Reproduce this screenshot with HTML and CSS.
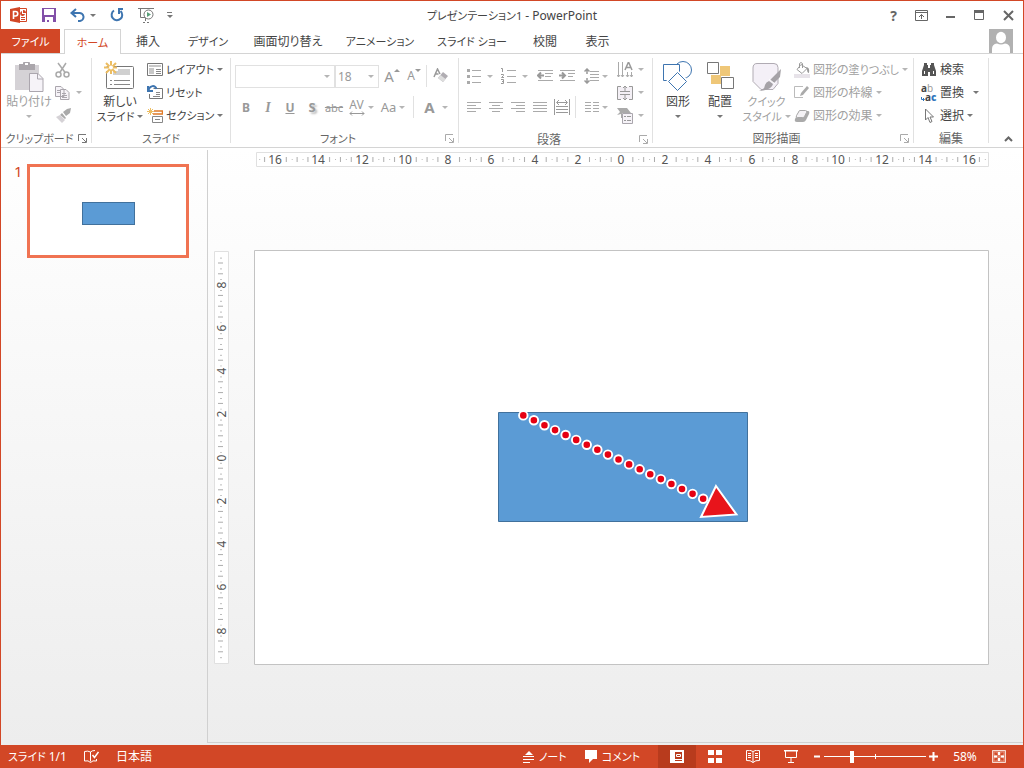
FILE: index.html
```html
<!DOCTYPE html>
<html lang="ja">
<head>
<meta charset="utf-8">
<title>プレゼンテーション1 - PowerPoint</title>
<link rel="stylesheet" href="styles.css">
</head>
<body>
<div class="window">

<header class="titlebar">
  <div class="quick">
    <svg class="app-icon" width="18" height="16" viewBox="0 0 18 16"><path fill="#d24726" d="M0 2 10 0v16L0 14z"/><path fill="none" stroke="#d24726" d="M10 1.500h6.500v13H10M11 10.500h4M11 12.500h4"/><path fill="#d24726" d="M12 4a2.500 2.500 0 1 0 3 3h-3z"/><path fill="#d24726" d="M13 3a3 3 0 0 1 3 3h-3z"/><path fill="none" stroke="#fff" stroke-width="1.600" d="M3.500 12V4.500H5.500a2 2 0 0 1 0 4.500H3.500"/></svg>
    <button aria-label="上書き保存"><svg width="14" height="14" viewBox="0 0 14 14"><path fill="#8250a8" fill-rule="evenodd" d="M0 0h14v14H0zM2 1v6h10V1zM3 9v5h2v-2h2v2h4V9z"/></svg></button>
    <button class="undo" aria-label="元に戻す"><svg width="15" height="14" viewBox="0 0 15 14"><path fill="none" stroke="#3e75b0" stroke-width="2" d="M6 1 1.500 5 6 9M2 5h7a4 4 0 0 1 1 8H8"/></svg><i class="caret"></i></button>
    <button aria-label="やり直し"><svg width="14" height="14" viewBox="0 0 14 14"><path fill="none" stroke="#3e75b0" stroke-width="2" d="M4 2.500A5.300 5.300 0 1 0 10.500 3"/><path fill="none" stroke="#3e75b0" stroke-width="2" d="M13 1H9v5"/></svg></button>
    <button class="show" aria-label="先頭から開始"><svg width="17" height="16" viewBox="0 0 17 16"><path fill="none" stroke="#777" d="M0 1.500h16M2.500 2v8.500H7M7.500 11v3M5 15.500h2M9 15.500h2"/><circle cx="10.500" cy="7.500" r="4.500" fill="#fff" stroke="#777"/><path fill="#5aa07a" d="m9 5 4 2.500L9 10z"/></svg></button>
    <button aria-label="カスタマイズ"><svg width="6" height="8" viewBox="0 0 6 8"><path fill="#777" d="M0 1h5v1H0zM0 4h6L3 7z"/></svg></button>
  </div>
  <h1 class="title"><span class="kana">プレゼンテーション1</span> - PowerPoint</h1>
  <div class="controls">
    <button class="help" aria-label="ヘルプ">?</button>
    <button aria-label="リボンの表示オプション"><svg width="13" height="11" viewBox="0 0 13 11"><path fill="none" stroke="#666" d="M.5.500h12v10H.5zM0 2.500h13M6.500 9V4.500M4 7l2.500-2.500L9 7"/></svg></button>
    <button aria-label="最小化"><svg width="10" height="11" viewBox="0 0 10 11"><path stroke="#666" stroke-width="2" d="M0 7h9"/></svg></button>
    <button aria-label="最大化"><svg width="11" height="11" viewBox="0 0 11 11"><path fill="none" stroke="#666" d="M.5.500h9v9h-9z"/><path fill="#666" d="M0 0h10v3H0z"/></svg></button>
    <button aria-label="閉じる"><svg width="11" height="11" viewBox="0 0 11 11"><path stroke="#666" stroke-width="2" d="m1 1 9 9M10 1l-9 9"/></svg></button>
  </div>
</header>

<nav class="tabs">
  <button class="tab file kana">ファイル</button>
  <button class="tab active kana">ホーム</button>
  <button class="tab">挿入</button>
  <button class="tab kana">デザイン</button>
  <button class="tab">画面切り替え</button>
  <button class="tab kana">アニメーション</button>
  <button class="tab kana">スライド ショー</button>
  <button class="tab">校閲</button>
  <button class="tab">表示</button>
  <svg class="avatar" width="24" height="24" viewBox="0 0 24 24"><path fill="#b1b1b1" d="M0 0h24v24H0z"/><ellipse cx="12" cy="8.500" rx="5" ry="5.800" fill="#fff"/><path fill="#fff" d="M3 24v-4q0-5 5-5.500 4 2 8 0 5 .5 5 5.500v4z"/></svg>
</nav>

<div class="ribbon">
  <section class="group clipboard">
    <div class="body">
      <button class="big off" disabled>
        <svg width="30" height="34" viewBox="0 0 30 34"><path fill="#d5d2d6" d="M1 5h24v25H1z"/><path fill="#aaa6ab" d="M5 4h4V3q0-1 1-1h5q1 0 1 1v1h5v6H5z"/><path fill="#fff" d="M11 3h3v2h-3z"/><path fill="#f6f3f8" stroke="#aba6ae" d="M15.500 13.500H24l5 5v13H15.500z"/><path fill="none" stroke="#aba6ae" d="M23.500 14v5H29"/></svg>
        <span>貼り付け</span><span class="line"><i class="caret"></i></span>
      </button>
      <div class="stack">
        <button class="small off" disabled aria-label="切り取り"><svg width="16" height="16" viewBox="0 0 16 16"><g fill="none" stroke="#aaa" stroke-width="1.500"><path d="m3 1 7.500 10M11 1 4.500 11"/><circle cx="3.500" cy="12.500" r="2.500"/><circle cx="11.500" cy="12.500" r="2.500"/></g></svg></button>
        <button class="small off" disabled aria-label="コピー"><svg width="16" height="16" viewBox="0 0 16 16"><path fill="#f6f3f8" stroke="#aaa6ad" d="M.5 1.500H6l3 3v7H.5zM5.500 4.500H11l3 3v7H5.500z"/><path stroke="#aaa6ad" d="M2 5.500h3M2 7.500h3M7 8.500h4M7 10.500h5M7 12.500h5"/></svg><i class="caret gap"></i></button>
        <button class="small off" disabled aria-label="書式のコピー/貼り付け"><svg width="16" height="16" viewBox="0 0 16 16"><path fill="#aaa" d="m12 1 4-1-1 5-4 3-3-4zM7 5l4 5-1 1-5-4z"/><path fill="#d5d2d6" d="m5 7 5 5-3 3-6-6z"/></svg></button>
      </div>
    </div>
    <footer class="caption"><span class="kana">クリップボード</span><button class="launch" aria-label="クリップボードの詳細"><svg width="9" height="9" viewBox="0 0 9 9"><path fill="none" stroke="currentColor" d="M.5 7V.5H8M4 4l4 4M8.500 4v4.500H4"/></svg></button></footer>
  </section>

  <section class="group slides">
    <div class="body">
      <button class="big">
        <svg width="34" height="34" viewBox="0 0 34 34"><rect x="3.500" y="6.500" width="27" height="22" rx="1" fill="#fff" stroke="#777"/><path fill="#d0d0d0" d="M9 9h18v6H9z"/><path stroke="#888" d="M7 20.500h2M11 20.500h16M7 24.500h2M11 24.500h16"/><path stroke="#fff" stroke-width="4" d="M8 3v13M1 9h14"/><path stroke="#ecbd62" stroke-width="2" d="M8 1v13M1 7.500h13M3 3l10 10M13 3 3 13"/><circle cx="8" cy="7.500" r="2" fill="#fff"/></svg>
        <span>新しい</span><span class="line kana">スライド<i class="caret"></i></span>
      </button>
      <div class="stack">
        <button class="small"><svg width="16" height="16" viewBox="0 0 16 16"><path fill="#fff" stroke="#777" d="M.5 1.500h15v12H.5z"/><path fill="#c8c8c8" d="M2 3h12v2H2zM2 6h5v6H2z"/><path stroke="#888" d="M9 7.500h5M9 9.500h5M9 11.500h5"/></svg><span class="kana">レイアウト</span><i class="caret"></i></button>
        <button class="small"><svg width="16" height="16" viewBox="0 0 16 16"><path fill="#fff" stroke="#777" d="M6.500 3.500h9v10h-13V9"/><path stroke="#888" d="M9 7.500h4M9 9.500h4M6 11.500h7"/><path fill="none" stroke="#3e75b0" stroke-width="2" d="M1 1v5h5M1.500 5C3 0 8 0 9.500 4"/></svg><span class="kana">リセット</span></button>
        <button class="small"><svg width="16" height="16" viewBox="0 0 16 16"><path stroke="#ecbd62" d="M3.500 0v7M0 3.500h7M1 1l5 5M6 1 1 6"/><path fill="#fff" stroke="#e07a25" stroke-width="1.500" d="M7 3h8.500v3H6"/><path fill="#fff" stroke="#888" d="M5.500 8.500h10v6h-10z"/><path stroke="#888" d="M8 11.500h5"/></svg><span class="kana">セクション</span><i class="caret"></i></button>
      </div>
    </div>
    <footer class="caption"><span class="kana">スライド</span></footer>
  </section>

  <section class="group font off">
    <div class="rows">
      <div class="row">
        <label class="combo wide"><select disabled aria-label="フォント"><option></option></select><i class="caret"></i></label>
        <label class="combo"><select disabled aria-label="フォント サイズ"><option>18</option></select><i class="caret"></i></label>
        <button class="cell grow" disabled aria-label="フォント サイズの拡大"><b>A</b><i class="up"></i></button>
        <button class="cell shrink" disabled aria-label="フォント サイズの縮小"><b>A</b><i class="caret"></i></button>
        <i class="rule"></i>
        <button class="cell clear" disabled aria-label="書式のクリア"><svg width="16" height="16" viewBox="0 0 16 16"><path fill="none" stroke="#999" stroke-width="1.500" d="M1 9 4.500 1 7 6M2.500 6h3"/><path fill="#b0adb2" d="m10 4 5 4-5 6-5-4z"/><path fill="#ddd" d="m7.500 7 5 4-2.500 3-5-4z"/></svg></button>
      </div>
      <div class="row">
        <button class="cell" disabled><b>B</b></button>
        <button class="cell italic" disabled><b>I</b></button>
        <button class="cell under" disabled><b>U</b></button>
        <button class="cell shadow" disabled><b>S</b></button>
        <button class="cell strike" disabled>abc</button>
        <button class="cell menu" disabled aria-label="文字の間隔"><span class="kern">AV<svg width="16" height="5" viewBox="0 0 16 5"><path fill="none" stroke="#999" d="M1 2.500h14M3 .5l-2 2 2 2M13 .5l2 2-2 2"/></svg></span><i class="caret"></i></button>
        <button class="cell menu case" disabled>Aa<i class="caret"></i></button>
        <i class="rule"></i>
        <button class="cell menu color" disabled><b>A</b><i class="caret"></i></button>
      </div>
    </div>
    <footer class="caption"><span class="kana">フォント</span><button class="launch" aria-label="フォントの詳細"><svg width="9" height="9" viewBox="0 0 9 9"><path fill="none" stroke="currentColor" d="M.5 7V.5H8M4 4l4 4M8.500 4v4.500H4"/></svg></button></footer>
  </section>

  <section class="group para off">
    <div class="body">
      <div class="rows">
        <div class="row">
          <button class="cell list" disabled aria-label="箇条書き"><svg width="14" height="16" viewBox="0 0 14 16"><path stroke="#aaa" d="M5 2.500h9M5 8.500h9M5 14.500h9"/><path fill="#aaa" d="M0 1h3v3H0zM0 7h3v3H0zM0 13h3v3H0z"/></svg><i class="caret"></i></button>
          <button class="cell list" disabled aria-label="段落番号"><svg width="15" height="16" viewBox="0 0 15 16"><path stroke="#aaa" d="M6 2.500h9M6 8.500h9M6 14.500h9"/><path fill="none" stroke="#999" d="M0 .5h1.500V4M0 6.500h2.500v1l-2 2H3M0 11.500h2.500v4H0M1 13.500h2"/></svg><i class="caret"></i></button>
          <button class="cell dent" disabled aria-label="インデントを減らす"><svg width="16" height="12" viewBox="0 0 16 12"><path stroke="#aaa" d="M1 .5h15M8 3.500h8M8 6.500h6M1 10.500h15"/><path fill="none" stroke="#999" stroke-width="2" d="M1 5.500h6M4 2.500l-3 3 3 3"/></svg></button>
          <button class="cell" disabled aria-label="インデントを増やす"><svg width="16" height="12" viewBox="0 0 16 12"><path stroke="#aaa" d="M1 .5h15M9 3.500h7M9 6.500h5M1 10.500h15"/><path fill="none" stroke="#999" stroke-width="2" d="M0 5.500h6M3 2.500l3 3-3 3"/></svg></button>
          <button class="cell menu" disabled aria-label="行間"><svg width="15" height="16" viewBox="0 0 15 16"><path fill="none" stroke="#aaa" d="M6 3.500h9M6 6.500h9M6 9.500h9M6 12.500h9"/><path fill="none" stroke="#999" stroke-width="1.500" d="M3 1v5M3 10v5M.5 3.500 3 1l2.500 2.500M.5 12.500 3 15l2.500-2.500"/></svg><i class="caret"></i></button>
        </div>
        <div class="row">
          <button class="cell" disabled aria-label="左揃え"><svg width="14" height="11" viewBox="0 0 14 11"><path stroke="#aaa" d="M0 .5h14M0 3.500h9M0 6.500h14M0 9.500h9"/></svg></button>
          <button class="cell" disabled aria-label="中央揃え"><svg width="14" height="11" viewBox="0 0 14 11"><path stroke="#aaa" d="M0 .5h14M3 3.500h8M0 6.500h14M3 9.500h8"/></svg></button>
          <button class="cell" disabled aria-label="右揃え"><svg width="14" height="11" viewBox="0 0 14 11"><path stroke="#aaa" d="M0 .5h14M5 3.500h9M0 6.500h14M5 9.500h9"/></svg></button>
          <button class="cell" disabled aria-label="両端揃え"><svg width="14" height="11" viewBox="0 0 14 11"><path stroke="#aaa" d="M0 .5h14M0 3.500h14M0 6.500h14M0 9.500h14"/></svg></button>
          <button class="cell" disabled aria-label="均等割り付け"><svg width="16" height="16" viewBox="0 0 16 16"><path fill="none" stroke="#999" d="M.5 0v16M15.500 0v16M3 3.500h10M5 1 2.500 3.500 5 6M11 1l2.500 2.500L11 6M2 7.500h12M2 10.500h12M2 13.500h12"/></svg></button>
          <i class="rule"></i>
          <button class="cell menu" disabled aria-label="段組み"><svg width="14" height="11" viewBox="0 0 14 11"><path stroke="#aaa" d="M0 .5h6M8 .5h6M0 3.500h6M8 3.500h6M0 6.500h6M8 6.500h6M0 9.500h6M8 9.500h6"/></svg><i class="caret"></i></button>
        </div>
      </div>
      <div class="stack">
        <button class="small" disabled aria-label="文字列の方向"><svg width="16" height="16" viewBox="0 0 16 16"><path fill="none" stroke="#aaa" d="M1.500 0v15M5.500 0v15M10.500 10v5M14.500 10v5M0 13l1.500 2L3 13M4 13l1.500 2L7 13M9 13l1.500 2 1.500-2M13 13l1.500 2 1.500-2"/><path fill="none" stroke="#999" stroke-width="1.500" d="m8 8 3.500-8L15 8M9 5.500h5"/></svg><i class="caret gap"></i></button>
        <button class="small" disabled aria-label="文字の配置"><svg width="16" height="16" viewBox="0 0 16 16"><path fill="#f4f0f6" d="M1 2h14v12H1z"/><path fill="none" stroke="#999" d="M4 1.500H.5v13H4M12 1.500h3.500v13H12"/><path fill="none" stroke="#999" d="M3 6.500h10M3 9.500h10M8 1v5M8 10v5M6 3l2-2 2 2M6 13l2 2 2-2"/></svg><i class="caret gap"></i></button>
        <button class="small" disabled aria-label="SmartArt に変換"><svg width="16" height="16" viewBox="0 0 16 16"><path fill="#aaa" d="M0 0h10l4 5H5v5H4V6L0 7l3-3z"/><path fill="#f6f3f8" stroke="#aaa6ad" d="M5.500 5.500h10v10h-10z"/><path stroke="#999" d="M7 8.500h2M10 8.500h4M7 12.500h2M10 12.500h4"/></svg><i class="caret gap"></i></button>
      </div>
    </div>
    <footer class="caption"><span>段落</span><button class="launch" aria-label="段落の詳細"><svg width="9" height="9" viewBox="0 0 9 9"><path fill="none" stroke="currentColor" d="M.5 7V.5H8M4 4l4 4M8.500 4v4.500H4"/></svg></button></footer>
  </section>

  <section class="group drawing">
    <div class="body">
      <button class="big shape">
        <svg width="30" height="34" viewBox="0 0 30 34"><g fill="#fff" stroke="#3e75b0"><circle cx="20" cy="10" r="8.500"/><path d="M.5 4.500h16v16H.5z"/><path stroke="#fff" stroke-width="4" d="m14.500 12.500 9 9-9 9-9-9z"/><path d="m14.500 12.500 9 9-9 9-9-9z"/></g></svg>
        <span>図形</span><span class="line"><i class="caret"></i></span>
      </button>
      <button class="big arrange">
        <svg width="28" height="34" viewBox="0 0 28 34"><path fill="#efc778" d="M14 6h10v10H14zM5 15h10v9H5z"/><path fill="#fff" stroke="#777" d="M1.500 2.500h11v11h-11zM15.500 17.500h12v11h-12z"/></svg>
        <span>配置</span><span class="line"><i class="caret"></i></span>
      </button>
      <button class="big off quickstyle" disabled>
        <svg width="30" height="34" viewBox="0 0 30 34"><path fill="#f4f0f7" stroke="#b0abb3" d="M5 3.500h17q4 0 4 4v16l-5 6H9l-8-8V8q0-4.500 4-4.500z"/><path fill="#a5a2a7" d="m29 9-1 8-6 6-4-3zM17 21l4 3q-1 6-14 7 6-2 6-6 1-3 4-4z"/><path stroke="#fff" d="m17 19 6 5"/></svg>
        <span class="kana">クイック</span><span class="line kana">スタイル<i class="caret"></i></span>
      </button>
      <div class="stack">
        <button class="small off" disabled><svg width="16" height="16" viewBox="0 0 16 16"><path fill="#e7e3e9" d="M0 12h16v4H0z"/><path fill="#fff" stroke="#999" d="m7 2.500 6 4-5 5-5-4z"/><path fill="none" stroke="#999" d="M5.500 6V1.500Q7-.5 8.500 1.500V6"/><path fill="#999" d="M12 5q4 0 3 6-2 0-2-4z"/></svg><span>図形の<span class="kana">塗りつぶし</span></span><i class="caret"></i></button>
        <button class="small off" disabled><svg width="16" height="16" viewBox="0 0 16 16"><path fill="none" stroke="#bbb" d="M9 1.500H.5v11H9"/><path fill="#aaa" d="m13 1 2 2-6 7-3 1 1-3z"/></svg><span>図形の枠線</span><i class="caret"></i></button>
        <button class="small off" disabled><svg width="16" height="16" viewBox="0 0 16 16"><path fill="#aaa" d="M5 3h9q2 0 1 3l-3 6q-1 2-3 2H3q-3 0-2-3z"/><path fill="#f4f2f5" stroke="#aaa" d="M5.500 2.500h6q2 0 1 2l-2 4q-.5 1-2 1h-5q-2 0-1-2z"/></svg><span>図形の効果</span><i class="caret"></i></button>
      </div>
    </div>
    <footer class="caption"><span>図形描画</span><button class="launch dim" aria-label="図形描画の詳細"><svg width="9" height="9" viewBox="0 0 9 9"><path fill="none" stroke="currentColor" d="M.5 7V.5H8M4 4l4 4M8.500 4v4.500H4"/></svg></button></footer>
  </section>

  <section class="group edit">
    <div class="body">
      <div class="stack">
        <button class="small"><svg width="16" height="16" viewBox="0 0 16 16"><path fill="#555" d="M3 1h3v2h1v3h2V3h1V1h3v2l2 6v5H9v-4H7v4H1V9l2-6z"/><path stroke="#fff" d="M3.500 9v3M12.500 9v3"/></svg><span>検索</span></button>
        <button class="small"><span class="swap"><span>a<em>b</em></span><span><svg width="4" height="5" viewBox="0 0 4 5"><path fill="none" stroke="#3277bd" d="M.5 0v2.500H3M2 1l1.500 1.500L2 4"/></svg>a<b>c</b></span></span><span>置換</span><i class="caret far"></i></button>
        <button class="small"><svg width="16" height="16" viewBox="0 0 16 16"><path fill="#fff" stroke="#777" d="M4.500 1v11L7 9.500l2 5 2-1-2-4.500h3.500z"/></svg><span>選択</span><i class="caret"></i></button>
      </div>
    </div>
    <footer class="caption"><span>編集</span></footer>
  </section>
  <button class="collapse" aria-label="リボンを折りたたむ"><svg width="9" height="6" viewBox="0 0 9 6"><path fill="none" stroke="#666" stroke-width="2" d="M1 5l3.500-3.500L8 5"/></svg></button>
</div>

<main class="work">
  <aside class="thumbs">
    <span class="num">1</span>
    <svg class="thumb" viewBox="0 0 156 88"><rect x="52.500" y="35.500" width="52" height="22" fill="#5b9bd5" stroke="#41719c"/></svg>
  </aside>
  <div class="canvas">
    <svg class="hruler" viewBox="0 0 733 15">
      <defs><pattern id="ht" x="360.600" width="10.830" height="15" patternUnits="userSpaceOnUse"><path stroke="#aaa" d="M5.400 5v5"/><path stroke="#bbb" d="M.5 7v1"/></pattern></defs>
      <path fill="#fff" stroke="#e0e0e0" d="M.5.500h732v14H.5z"/>
      <path fill="url(#ht)" d="M3 1h728v13H3z"/>
      <path stroke="#fff" stroke-width="13" stroke-dasharray="15 28.340" d="M11.500 7.500H725"/>
      <g class="digits"><text x="19" y="12">16</text><text x="62" y="12">14</text><text x="106" y="12">12</text><text x="149" y="12">10</text><text x="192" y="12">8</text><text x="235" y="12">6</text><text x="279" y="12">4</text><text x="322" y="12">2</text><text x="365" y="12">0</text><text x="409" y="12">2</text><text x="452" y="12">4</text><text x="496" y="12">6</text><text x="539" y="12">8</text><text x="582" y="12">10</text><text x="626" y="12">12</text><text x="669" y="12">14</text><text x="713" y="12">16</text></g>
    </svg>
    <svg class="vruler" viewBox="0 0 15 413">
      <defs><pattern id="vt" y="201" width="15" height="10.800" patternUnits="userSpaceOnUse"><path stroke="#aaa" d="M4 5.400h5"/><path stroke="#bbb" d="M6 .5h2"/></pattern></defs>
      <path fill="#fff" stroke="#e0e0e0" d="M.5.500h14v412H.5z"/>
      <path fill="url(#vt)" d="M1 4h13v405H1z"/>
      <path stroke="#fff" stroke-width="13" stroke-dasharray="9 34.200" d="M7.500 29V390"/>
      <g class="digits"><text transform="translate(12 34) rotate(-90)">8</text><text transform="translate(12 77) rotate(-90)">6</text><text transform="translate(12 120) rotate(-90)">4</text><text transform="translate(12 163) rotate(-90)">2</text><text transform="translate(12 207) rotate(-90)">0</text><text transform="translate(12 250) rotate(-90)">2</text><text transform="translate(12 293) rotate(-90)">4</text><text transform="translate(12 336) rotate(-90)">6</text><text transform="translate(12 380) rotate(-90)">8</text></g>
    </svg>
    <svg class="slide" viewBox="0 0 735 415">
      <path fill="#fff" stroke="#c3c3c3" d="M.5.500h734v414H.5z"/>
      <path fill="#5b9bd5" stroke="#41719c" d="M244.500 162.500h249v109h-249z"/>
      <g fill="none" stroke-linecap="round"><path stroke="#fff" stroke-width="10.400" stroke-dasharray="0 11.660" d="m269.300 165.400 180 83.400"/><path stroke="#e60012" stroke-width="6.600" stroke-dasharray="0 11.660" d="m269.300 165.400 180 83.400"/></g>
      <path fill="#e8141b" stroke="#fff" stroke-width="2" d="m462 236 20.500 28.500-35.500 2.500z"/>
    </svg>
  </div>
</main>

<footer class="status">
  <div class="info"><span class="kana">スライド <span class="count">1/1</span></span>
    <button aria-label="スペル チェック"><svg width="15" height="13" viewBox="0 0 15 13"><path fill="none" stroke="#fff" d="M6.500 11.500V2Q4 .5.500 1.500v9.500q4-1 6 1.500 2-2.500 6-1.500V9M6.500 2Q8 .5 11 .5"/><path fill="none" stroke="#fff" stroke-width="1.500" d="m8.500 5 2 2.500L14.500 2"/></svg></button>
    <button>日本語</button></div>
  <button class="note kana"><svg width="12" height="12" viewBox="0 0 12 12"><path fill="#fff" d="m6 0 4 4H2z"/><path stroke="#fff" d="M0 5.500h11M0 8.500h11M0 11.500h7"/></svg>ノート</button>
  <button class="comment kana"><svg width="13" height="13" viewBox="0 0 13 13"><path fill="#fff" d="M0 0h12v9H8l-4 4V9H0z"/></svg>コメント</button>
  <button class="view on" aria-label="標準"><svg width="14" height="13" viewBox="0 0 14 13"><path fill="none" stroke="#fff" stroke-width="2" d="M1 1h12v11H1z"/><path fill="#fff" d="M1 1h4v11H1zM5 9h8v1H5z"/><path fill="none" stroke="#fff" d="M6.500 4.500h4v2h-4z"/></svg></button>
  <button class="view" aria-label="スライド一覧"><svg width="14" height="13" viewBox="0 0 14 13"><path fill="#fff" d="M0 0h6v5H0zM8 0h6v5H8zM0 8h6v5H0zM8 8h6v5H8z"/></svg></button>
  <button class="view" aria-label="閲覧表示"><svg width="14" height="13" viewBox="0 0 14 13"><path fill="none" stroke="#fff" d="M7 12.500V1.500Q4-.5.500.5v10q4-.5 6.500 2Q9.500 10 13.500 10.500V.5Q10-.5 7 1.500M2 3.500h3M2 5.500h3M2 7.500h3M9 3.500h3M9 5.500h3M9 7.500h3"/></svg></button>
  <button class="view" aria-label="スライド ショー"><svg width="14" height="13" viewBox="0 0 14 13"><path fill="none" stroke="#fff" d="M0 1h14M1.500 1v6.500h11V1M7 8v4M4 12.500h6"/><path stroke="#fff" d="M0 .5h14"/></svg></button>
  <button class="step" aria-label="縮小"><svg width="8" height="9" viewBox="0 0 8 9"><path stroke="#fff" stroke-width="2" d="M1 4.500h6"/></svg></button>
  <input class="zoom" type="range" min="0" max="100" value="27" aria-label="ズーム">
  <button class="step" aria-label="拡大"><svg width="9" height="9" viewBox="0 0 9 9"><path stroke="#fff" stroke-width="2" d="M0 4.500h9M4.500 0v9"/></svg></button>
  <button class="percent">58%</button>
  <button class="fit" aria-label="ウィンドウに合わせる"><svg width="14" height="13" viewBox="0 0 14 13"><path fill="#e0826a" d="M0 0h14v13H0z"/><path fill="none" stroke="#f6d9d0" d="M.5.500h13v12H.5z"/><path stroke="#d24726" stroke-width="2" d="M3 3l2 2M11 3 9 5M3 10l2-2M11 10 9 8"/><path stroke="#fff" stroke-width="2" d="M7 2v3M7 8v3M2 6.500h3M9 6.500h3"/></svg></button>
</footer>
</div>
</body>
</html>
```
FILE: styles.css
```css
* { box-sizing: border-box; }
body {
  margin: 0;
  font: 12px/15px "Noto Sans", "Noto Sans CJK JP", sans-serif;
  font-feature-settings: "palt";
  color: #444;
}
button, select {
  font: inherit;
  font-feature-settings: inherit;
  color: inherit;
  border: 0;
  padding: 0;
  background: none;
  white-space: nowrap;
}
svg { display: block; flex: none; }
i { font-style: normal; flex: none; }
.kana { font-size: 11px; }

.window {
  display: flex;
  flex-direction: column;
  min-height: 100vh;
  border: 1px solid #d24726;
  border-bottom: 0;
  background: #fff;
}
.caret {
  width: 0;
  height: 0;
  border: 3px solid transparent;
  border-top-color: #777;
  border-bottom: 0;
}
.off .caret { border-top-color: #b5b5b5; }

/* title bar */
.titlebar {
  display: grid;
  grid-template-columns: 1fr auto 1fr;
  align-items: center;
  height: 28px;
}
.quick { display: flex; align-items: center; padding-left: 9px; gap: 14px; }
.quick .undo { display: flex; align-items: center; gap: 5px; }
.quick .show { margin-right: -2px; }
.title { margin: 0; font-size: 12px; font-weight: 400; }
.controls { display: flex; justify-content: flex-end; align-items: center; gap: 18px; padding-right: 9px; }
.help { font-size: 14px; font-weight: 700; color: #666; }

/* tabs */
.tabs {
  display: grid;
  grid-template-columns: 59px 61px 54px 66px 94px 90px 94px 52px 53px 1fr;
  height: 25px;
  border-bottom: 1px solid #d4d4d4;
}
.file { background: #d24726; color: #fff; }
.active {
  margin: 0 0 -1px 4px;
  border: 1px solid #d4d4d4;
  border-bottom: 0;
  background: #fff;
  color: #d24726;
}
.avatar { justify-self: end; margin-right: 10px; }

/* ribbon */
.ribbon {
  display: flex;
  height: 94px;
  padding: 4px 0;
  border-bottom: 1px solid #d4d4d4;
}
.group { display: flex; flex-direction: column; border-right: 1px solid #e1e1e1; flex: none; }
.clipboard { width: 91px; }
.slides { width: 139px; }
.font { width: 228px; }
.para { width: 194px; }
.drawing { width: 261px; }
.edit { width: 75px; }
.body { display: flex; height: 70px; }
.caption { display: flex; align-items: center; height: 16px; padding-top: 6px; color: #666; white-space: nowrap; }
.caption > span { flex: 1; text-align: center; }
.launch { width: 13px; color: #777; }
.off .launch, .dim { color: #aaa; }

.big { display: flex; flex-direction: column; align-items: center; padding-top: 2px; }
.big.off, .small.off { color: #a0a0a0; }
.line { display: flex; align-items: center; justify-content: center; gap: 3px; height: 15px; }
.clipboard .big { width: 46px; margin: 0 3px 0 5px; }
.slides .big { width: 48px; margin: 0 3px 0 4px; }
.shape { width: 40px; margin-left: 5px; }
.arrange { width: 42px; margin-left: 1px; }
.quickstyle { width: 49px; margin: 0 3px 0 1px; }
.stack { display: flex; flex-direction: column; }
.small { display: flex; align-items: center; gap: 3px; height: 23px; }
.gap { margin-left: 2px; }
.far { margin-left: 6px; }
.edit .stack { padding-left: 7px; }

.rows { display: grid; grid-template-rows: 36px 26px; height: 70px; padding-left: 4px; }
.row { display: flex; align-items: center; }
.cell { display: flex; align-items: center; justify-content: center; width: 22px; height: 22px; color: #999; }
.menu { width: 32px; gap: 3px; }
.combo { display: grid; align-items: center; width: 44px; height: 23px; border: 1px solid #e1e1e1; }
.combo.wide { width: 100px; }
.combo select { grid-area: 1 / 1; appearance: none; padding-left: 2px; color: #999; opacity: 1; }
.combo .caret { grid-area: 1 / 1; justify-self: end; margin-right: 4px; }
.rule { width: 1px; height: 22px; margin: 0 4px; background: #e1e1e1; }
.grow, .shrink { align-items: flex-start; }
.grow { font-size: 15px; margin-left: 2px; }
.grow b, .shrink b { font-weight: 400; line-height: 22px; }
.up { border: 3px solid transparent; border-bottom-color: #999; border-top: 0; margin-top: 4px; }
.shrink .caret { margin-top: 4px; border-top-color: #999; }
.italic { font-family: "Liberation Serif", serif; font-style: italic; font-size: 14px; }
.under { text-decoration: underline; }
.shadow { text-shadow: 2px 2px 2px #bbb; font-size: 13px; }
.strike { text-decoration: line-through; font-size: 11px; }
.kern { line-height: 12px; }
.case { font-size: 13px; }
.color { font-size: 15px; gap: 7px; margin-left: 2px; }
.shrink + .rule { margin: 0 3px 0 1px; }

.para .rows { width: 158px; }
.list { width: 34px; gap: 6px; }
.dent { margin-left: 3px; }
.para .menu { margin-left: 2px; }
.para .rows .rule { margin: 0 2px; }

.swap { display: block; width: 16px; font-size: 10px; line-height: 9px; text-align: left; }
.swap > span { display: flex; align-items: flex-end; font-weight: 700; }
.swap em { font-style: normal; font-weight: 400; color: #999; }
.swap b { color: #3277bd; }
.collapse { align-self: flex-end; margin-left: auto; padding: 0 10px 1px; }

/* work area */
.work { display: flex; flex: 1; background: linear-gradient(#fff, #ededed); }
.thumbs {
  display: flex;
  align-items: flex-start;
  width: 207px;
  padding: 14px 0 0 13px;
  gap: 4px;
  margin: 2px 0;
  border-right: 1px solid #d0d0d0;
}
.num { width: 9px; font-size: 15px; color: #d24726; }
.thumb { width: 162px; border: 3px solid #f07352; background: #fff; }
.canvas {
  flex: 1;
  display: grid;
  grid-template-columns: 15px 1fr;
  grid-template-rows: auto 1fr;
  align-items: start;
  column-gap: 25px;
  row-gap: 83px;
  padding: 4px 34px 0 6px;
  border-bottom: 1px solid #d0d0d0;
  margin-bottom: 2px;
}
.hruler { grid-column: 2; width: calc(100% - 2px); margin-left: 2px; }
.vruler { width: 15px; margin-top: 1px; }
.slide { width: 100%; }
.digits { font-size: 12px; fill: #555; text-anchor: middle; }

/* status bar */
.status { display: flex; align-items: center; height: 23px; background: #d24726; color: #fff; }
.status button { display: flex; align-items: center; justify-content: center; height: 23px; }
.info { display: flex; align-items: center; gap: 17px; padding-left: 7px; margin-right: auto; white-space: nowrap; }
.count { font-size: 12px; }
.note, .comment { gap: 4px; margin-right: 18px; }
.view { width: 38px; }
.on { background: #b83b1d; }
.step { width: 14px; }
.zoom {
  appearance: none;
  width: 102px;
  height: 13px;
  margin: 0;
  background: linear-gradient(#fff, #fff) center / 100% 1px no-repeat, linear-gradient(#fff, #fff) center / 1px 5px no-repeat;
}
.zoom::-webkit-slider-thumb { appearance: none; width: 4px; height: 12px; background: #fff; }
.percent { width: 50px; }
.fit { width: 33px; padding-right: 16px; }
```
